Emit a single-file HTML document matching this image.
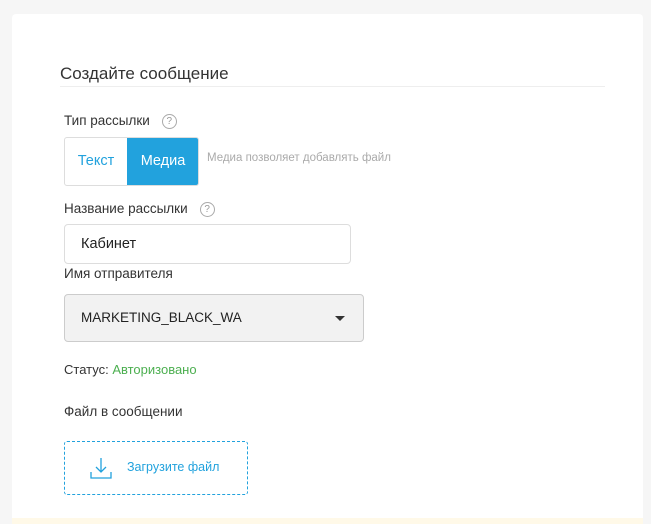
<!DOCTYPE html>
<html><head><meta charset="utf-8"><style>
*{box-sizing:border-box;margin:0;padding:0}
html,body{width:651px;height:524px;overflow:hidden}
body{background:#f6f6f6;font-family:"Liberation Sans",sans-serif;position:relative;color:#333}
.card{position:absolute;left:12px;top:14px;width:631px;height:510px;background:#fff;border-radius:4px 4px 0 0}
.a{position:absolute}
.lbl{font-size:13.5px;color:#333}
.q{display:inline-block;width:15px;height:15px;border:1px solid #aaa;border-radius:50%;font-size:10px;color:#999;text-align:center;line-height:13px;vertical-align:middle;margin-left:12px}
</style></head><body>
<div class="card"></div>
<div class="a" style="left:60px;top:64px;font-size:17px;color:#333">Создайте сообщение</div>
<div class="a" style="left:60px;top:86px;width:545px;height:1px;background:#eee"></div>
<div class="a lbl" style="left:64px;top:113px">Тип рассылки<span class="q">?</span></div>
<div class="a" style="left:64px;top:137px;width:135px;height:49px;border:1px solid #ddd;border-radius:3px;overflow:hidden">
<div class="a" style="left:0;top:0;width:62px;height:47px;color:#22a2dd;font-size:14.5px;line-height:47px;text-align:center">Текст</div>
<div class="a" style="left:62px;top:0;width:72px;height:47px;background:#22a2dd;color:#fff;font-size:14.5px;line-height:47px;text-align:center">Медиа</div>
</div>
<div class="a" style="left:207px;top:152px;font-size:11.5px;color:#aaa">Медиа позволяет добавлять файл</div>
<div class="a lbl" style="left:64px;top:201px">Название рассылки<span class="q">?</span></div>
<div class="a" style="left:64px;top:224px;width:287px;height:40px;border:1px solid #ddd;border-radius:4px;padding-left:16px;line-height:38px;font-size:14.5px;color:#222">Кабинет</div>
<div class="a lbl" style="left:64px;top:266px">Имя отправителя</div>
<div class="a" style="left:64px;top:294px;width:300px;height:48px;background:#f2f2f2;border:1px solid #ccc;border-radius:4px;padding-left:16px;line-height:46px;font-size:13.5px;color:#222">MARKETING_BLACK_WA
<div class="a" style="right:18px;top:21px;width:0;height:0;border-left:5px solid transparent;border-right:5px solid transparent;border-top:5px solid #333"></div></div>
<div class="a" style="left:64px;top:362px;font-size:13px;color:#333">Статус: <span style="color:#4caf50">Авторизовано</span></div>
<div class="a lbl" style="left:64px;top:404px">Файл в сообщении</div>
<div class="a" style="left:64px;top:441px;width:184px;height:54px;border:1px dashed #22a2dd;border-radius:3px">
<svg class="a" style="left:25px;top:15px" width="22" height="22" viewBox="0 0 22 22" fill="none" stroke="#22a2dd" stroke-width="1.3"><path d="M11 1V15M6 10L11 15L16 10M1 15V21H21V15"/></svg>
<div class="a" style="left:62px;top:18px;font-size:12.5px;color:#22a2dd">Загрузите файл</div>
</div>
<div class="a" style="left:12px;top:518px;width:631px;height:6px;background:#fff9e8"></div>
</body></html>
